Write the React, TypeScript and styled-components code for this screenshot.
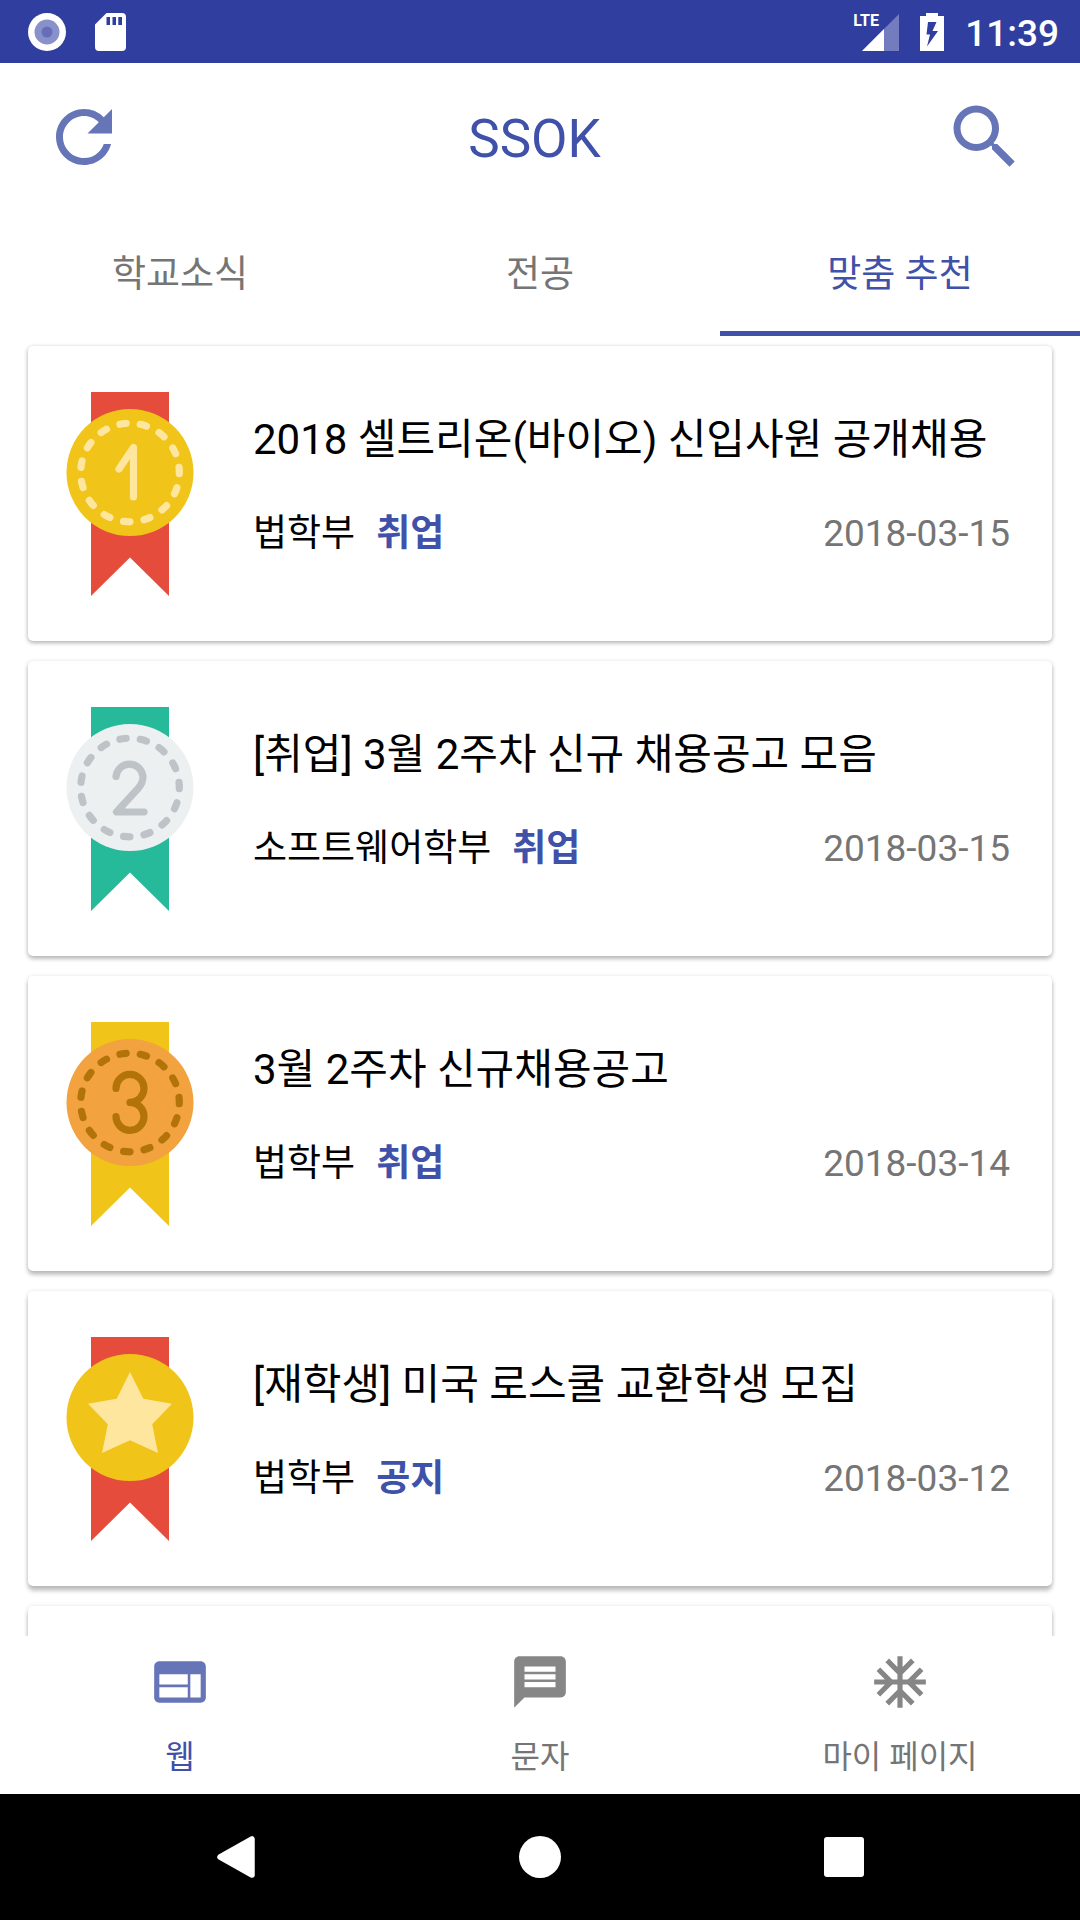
import React from "react";
import styled, { createGlobalStyle } from "styled-components";
import { MdAcUnit, MdMessage, MdRefresh, MdSearch, MdWeb } from "react-icons/md";

const color = {
  primary: "#3f51a8",
  primaryDark: "#303f9f",
  primaryIcon: "#6674b8",
  text: "#000000",
  muted: "#757575",
  mutedIcon: "#868686",
};

const GlobalStyle = createGlobalStyle`
  * { box-sizing: border-box; }
  body {
    margin: 0;
    background: #ffffff;
    font-family: Roboto, "Noto Sans CJK KR", sans-serif;
  }
  button {
    border: 0;
    padding: 0;
    background: none;
    font: inherit;
    color: inherit;
    cursor: pointer;
  }
  svg { display: block; }
`;

const Screen = styled.div`
  display: flex;
  flex-direction: column;
  height: 100vh;
`;

const StatusBar = styled.div`
  flex: none;
  display: flex;
  align-items: center;
  justify-content: space-between;
  height: 63px;
  padding: 0 21px 0 28px;
  background: ${color.primaryDark};
  color: #ffffff;
`;

const StatusGroup = styled.div<{ $gap: number }>`
  display: flex;
  align-items: center;
  gap: ${(p) => p.$gap}px;
`;

const Clock = styled.time`
  font-size: 37px;
  font-weight: 500;
  line-height: 42px;
  padding-top: 4px;
`;

const Network = styled.div`
  position: relative;
  width: 46px;
  height: 38px;
`;

const NetworkType = styled.span`
  position: absolute;
  top: 0;
  left: 0;
  font: bold 16px/16px Roboto, sans-serif;
`;

const AppBar = styled.header`
  flex: none;
  display: flex;
  align-items: center;
  justify-content: space-between;
  height: 147px;
  padding: 0 53px 0 42px;
  color: ${color.primary};
`;

const AppTitle = styled.h1`
  margin: 0;
  padding-top: 4px;
  font-size: 53px;
  font-weight: 400;
  line-height: 62px;
`;

const IconButton = styled.button`
  && { color: ${color.primaryIcon}; }
`;

const Tabs = styled.div`
  flex: none;
  display: flex;
  height: 126px;
`;

const Tab = styled.button<{ $active?: boolean }>`
  && {
    flex: 1;
    border-bottom: 5px solid ${(p) => (p.$active ? color.primary : "transparent")};
    color: ${(p) => (p.$active ? color.primary : color.muted)};
    font-size: 37px;
  }
`;

const List = styled.ul`
  flex: 1;
  min-height: 0;
  display: flex;
  flex-direction: column;
  gap: 20px;
  margin: 0;
  padding: 10px 28px;
  list-style: none;
  overflow-y: auto;
  scrollbar-width: none;
`;

const Card = styled.li<{ $depth: number }>`
  flex: none;
  display: flex;
  align-items: center;
  gap: 59px;
  min-height: 295px;
  padding: 46px 42px 45px 38px;
  border-radius: 5px;
  background: #ffffff;
  box-shadow:
    0 ${(p) => p.$depth}px 4px rgba(0, 0, 0, 0.2),
    0 1px 5px rgba(0, 0, 0, 0.16);
`;

const CardBody = styled.div`
  flex: 1;
  min-width: 0;
  display: flex;
  flex-direction: column;
  gap: 40px;
  padding-bottom: 14px;
`;

const CardTitle = styled.h2`
  margin: 0;
  font-size: 42px;
  font-weight: 400;
  line-height: 54px;
  color: ${color.text};
`;

const Meta = styled.div`
  display: flex;
  align-items: baseline;
  gap: 21px;
  font-size: 37px;
  line-height: 54px;
`;

const Category = styled.strong`
  font-weight: 700;
  color: ${color.primary};
`;

const PostDate = styled.time`
  margin-left: auto;
  color: ${color.muted};
`;

const BottomNav = styled.nav`
  flex: none;
  display: flex;
  height: 158px;
  background: #ffffff;
`;

const NavItem = styled.button<{ $active?: boolean }>`
  && {
    flex: 1;
    display: flex;
    flex-direction: column;
    align-items: center;
    gap: 21px;
    padding-top: 15px;
    color: ${(p) => (p.$active ? color.primary : color.muted)};
    font-size: 32px;
    line-height: 46px;
  }
  svg { color: ${(p) => (p.$active ? color.primaryIcon : color.mutedIcon)}; }
`;

const SystemBar = styled.footer`
  flex: none;
  display: flex;
  height: 126px;
  padding: 0 84px;
  background: #000000;
`;

const SystemButton = styled.button`
  && {
    flex: 1;
    display: flex;
    align-items: center;
    justify-content: center;
  }
`;

type Rank = "first" | "second" | "third" | "star";

const medalColors: Record<Rank, { ribbon: string; disc: string; mark: string }> = {
  first: { ribbon: "#e64c3c", disc: "#f0c419", mark: "#ffe69f" },
  second: { ribbon: "#26b99a", disc: "#ecf0f1", mark: "#bdc3c7" },
  third: { ribbon: "#f0c419", disc: "#f3a240", mark: "#b27409" },
  star: { ribbon: "#e64c3c", disc: "#f0c419", mark: "#ffe69f" },
};

const marks: Record<Exclude<Rank, "star">, string> = {
  first: "M53 77L67.5 55.5V105",
  second: "M50 69.5A13.6 14 0 0 1 77 69.5C77 74.5 75.5 77.5 72.500 81L50.500 105H78",
  third: "M50 66.500A14 14 0 1 1 64 80.400A14 14 0 1 1 50 94.500",
};

function Medal({ rank }: { rank: Rank }) {
  const c = medalColors[rank];
  return (
    <svg width="128" height="204" viewBox="0 0 128 204" aria-hidden="true">
      <path d="M25 0H103V204L64 165.500L25 204Z" fill={c.ribbon} />
      <circle cx="64" cy="80.500" r="63.500" fill={c.disc} />
      {rank === "star" ? (
        <path
          d="M64 35L77.300 61.700L106 66.700L86.200 87.300L92 116L64 103.300L36 116L41.800 87.300L22 66.700L50.700 61.700Z"
          fill={c.mark}
        />
      ) : (
        <g fill="none" stroke={c.mark} strokeWidth="7.200" strokeLinecap="round" strokeLinejoin="round">
          <circle
            cx="64"
            cy="80.500"
            r="49.300"
            pathLength="150"
            strokeDasharray="3.100 6.900"
            transform="rotate(-5.900 64 80.500)"
          />
          <path d={marks[rank]} />
        </g>
      )}
    </svg>
  );
}

const posts: { rank: Rank; title: string; dept: string; category: string; date: string }[] = [
  { rank: "first", title: "2018 셀트리온(바이오) 신입사원 공개채용", dept: "법학부", category: "취업", date: "2018-03-15" },
  { rank: "second", title: "[취업] 3월 2주차 신규 채용공고 모음", dept: "소프트웨어학부", category: "취업", date: "2018-03-15" },
  { rank: "third", title: "3월 2주차 신규채용공고", dept: "법학부", category: "취업", date: "2018-03-14" },
  { rank: "star", title: "[재학생] 미국 로스쿨 교환학생 모집", dept: "법학부", category: "공지", date: "2018-03-12" },
];

export default function App() {
  return (
    <>
      <GlobalStyle />
      <Screen lang="ko">
        <StatusBar>
          <StatusGroup $gap={29}>
            <svg width="38" height="38" viewBox="0 0 38 38">
              <circle cx="19" cy="19" r="19" fill="#fff" />
              <circle cx="19" cy="19" r="12.500" fill="#8991cb" />
              <circle cx="19" cy="19" r="5.500" fill="#656eb8" />
            </svg>
            <svg width="31" height="38" viewBox="0 0 31 38">
              <path
                fill="#fff"
                fillRule="evenodd"
                d="M11.500 0H27a4 4 0 0 1 4 4V34a4 4 0 0 1-4 4H4a4 4 0 0 1-4-4V11.500ZM11.500 4V12H15V4ZM17.500 4V12H21V4ZM23.300 4V12H27V4Z"
              />
            </svg>
          </StatusGroup>
          <StatusGroup $gap={21}>
            <Network>
              <NetworkType>LTE</NetworkType>
              <svg width="46" height="38" viewBox="0 0 46 38">
                <path d="M46 1V38H9Z" fill="#fff" fillOpacity="0.320" />
                <path d="M31 16V38H9Z" fill="#fff" />
              </svg>
            </Network>
            <svg width="24" height="38" viewBox="0 0 24 38">
              <path
                fill="#fff"
                fillRule="evenodd"
                d="M6 0H18V3H24V38H0V3H6ZM8 9L6.500 21.500H10L7 33.500L18 18H12.500L16.500 9Z"
              />
            </svg>
            <Clock>11:39</Clock>
          </StatusGroup>
        </StatusBar>

        <AppBar>
          <IconButton aria-label="새로고침">
            <MdRefresh size={84} />
          </IconButton>
          <AppTitle>SSOK</AppTitle>
          <IconButton aria-label="검색">
            <MdSearch size={84} />
          </IconButton>
        </AppBar>

        <Tabs role="tablist">
          <Tab role="tab" aria-selected={false}>학교소식</Tab>
          <Tab role="tab" aria-selected={false}>전공</Tab>
          <Tab role="tab" aria-selected $active>맞춤 추천</Tab>
        </Tabs>

        <List>
          {posts.map((post, i) => (
            <Card key={post.title} $depth={i + 2}>
              <Medal rank={post.rank} />
              <CardBody>
                <CardTitle>{post.title}</CardTitle>
                <Meta>
                  <span>{post.dept}</span>
                  <Category>{post.category}</Category>
                  <PostDate dateTime={post.date}>{post.date}</PostDate>
                </Meta>
              </CardBody>
            </Card>
          ))}
          <Card $depth={5} aria-hidden="true" />
        </List>

        <BottomNav>
          <NavItem $active aria-current="page">
            <MdWeb size={62} />
            웹
          </NavItem>
          <NavItem>
            <MdMessage size={62} />
            문자
          </NavItem>
          <NavItem>
            <MdAcUnit size={62} />
            마이 페이지
          </NavItem>
        </BottomNav>

        <SystemBar>
          <SystemButton aria-label="뒤로">
            <svg width="38" height="42" viewBox="0 0 38 42">
              <path d="M3 21L35 3V39Z" fill="#fff" stroke="#fff" strokeWidth="5.500" strokeLinejoin="round" />
            </svg>
          </SystemButton>
          <SystemButton aria-label="홈">
            <svg width="42" height="42" viewBox="0 0 42 42">
              <circle cx="21" cy="21" r="21" fill="#fff" />
            </svg>
          </SystemButton>
          <SystemButton aria-label="최근 앱">
            <svg width="40" height="40" viewBox="0 0 40 40">
              <rect width="40" height="40" rx="3" fill="#fff" />
            </svg>
          </SystemButton>
        </SystemBar>
      </Screen>
    </>
  );
}
